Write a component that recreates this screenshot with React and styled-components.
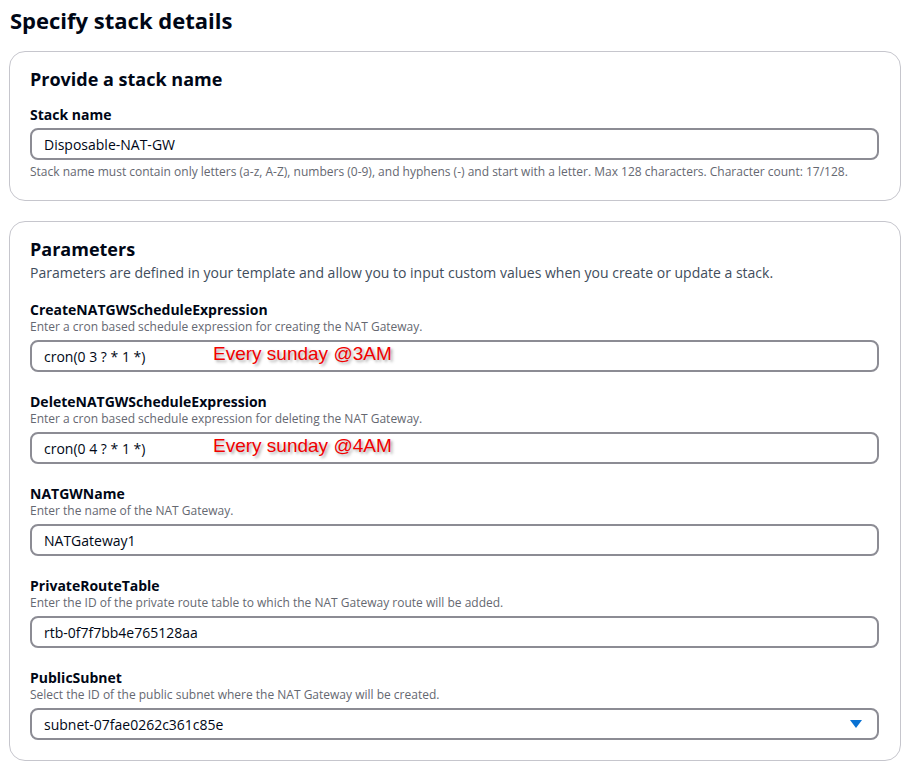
import React from 'react'
import styled, { createGlobalStyle } from 'styled-components'

const GlobalStyle = createGlobalStyle`
  body {
    margin: 0;
    background: #ffffff;
    font-family: "Open Sans", "Noto Sans", sans-serif;
    color: #000716;
  }
`;

const Page = styled.div`
  width: 912px;
  padding: 9px 11px 12px 9px;
  box-sizing: border-box;
  display: flex;
  flex-direction: column;
  gap: 20px;
`;

const PageTitle = styled.h1`
  margin: 0 0 0 1px;
  font-size: 22px;
  line-height: 22px;
  font-weight: 700;
  color: #000716;
`;

const Card = styled.section`
  border: 1px solid #c6c6cd;
  border-radius: 16px;
  padding: 15px 21px 20px 20px;
  display: flex;
  flex-direction: column;
`;

const CardTitle = styled.h2`
  margin: 0 0 2px;
  font-size: 18px;
  line-height: 24px;
  font-weight: 700;
  color: #000716;
`;

const CardDesc = styled.p`
  margin: 0;
  font-size: 14px;
  line-height: 20px;
  color: #414d5c;
`;

const FieldList = styled.div`
  display: flex;
  flex-direction: column;
  gap: 20px;
  margin-top: ${p => p.$top}px;
`;

const Field = styled.div`
  display: flex;
  flex-direction: column;
`;

const Label = styled.label`
  font-size: 14px;
  line-height: 19px;
  font-weight: 700;
  color: #000716;
`;

const Hint = styled.div`
  font-size: 12px;
  line-height: 16px;
  color: #656871;
`;

const InputBox = styled.div`
  position: relative;
  height: 32px;
  box-sizing: border-box;
  border: 2px solid #8c8c94;
  border-radius: 8px;
  margin: ${p => (p.$below ? '4px 0 4px' : '5px 0 0')};
  padding: 0 12px;
  display: flex;
  align-items: center;
  justify-content: space-between;
  font-size: 14px;
  color: #000716;
`;

const Note = styled.span`
  position: absolute;
  left: 181px;
  top: 0;
  font-family: "Liberation Sans", Arial, sans-serif;
  font-size: 19px;
  line-height: 24px;
  color: #f00000;
  text-shadow: 2px 2px 3px rgba(0, 0, 0, 0.35);
`;

const Caret = styled.span`
  width: 0;
  height: 0;
  border-left: 6px solid transparent;
  border-right: 6px solid transparent;
  border-top: 8px solid #0972d3;
  margin-right: 3px;
`;

const params = [
  {
    name: 'CreateNATGWScheduleExpression',
    hint: 'Enter a cron based schedule expression for creating the NAT Gateway.',
    value: 'cron(0 3 ? * 1 *)',
    note: 'Every sunday @3AM',
  },
  {
    name: 'DeleteNATGWScheduleExpression',
    hint: 'Enter a cron based schedule expression for deleting the NAT Gateway.',
    value: 'cron(0 4 ? * 1 *)',
    note: 'Every sunday @4AM',
  },
  {
    name: 'NATGWName',
    hint: 'Enter the name of the NAT Gateway.',
    value: 'NATGateway1',
  },
  {
    name: 'PrivateRouteTable',
    hint: 'Enter the ID of the private route table to which the NAT Gateway route will be added.',
    value: 'rtb-0f7f7bb4e765128aa',
  },
  {
    name: 'PublicSubnet',
    hint: 'Select the ID of the public subnet where the NAT Gateway will be created.',
    value: 'subnet-07fae0262c361c85e',
    select: true,
  },
];

export default function App() {
  return (
    <>
      <GlobalStyle />
      <Page>
        <PageTitle>Specify stack details</PageTitle>

        <Card>
          <CardTitle>Provide a stack name</CardTitle>
          <FieldList $top={12}>
            <Field>
              <Label>Stack name</Label>
              <InputBox $below>Disposable-NAT-GW</InputBox>
              <Hint>
                Stack name must contain only letters (a-z, A-Z), numbers (0-9), and hyphens (-) and start with a letter. Max 128 characters. Character count: 17/128.
              </Hint>
            </Field>
          </FieldList>
        </Card>

        <Card>
          <CardTitle>Parameters</CardTitle>
          <CardDesc>
            Parameters are defined in your template and allow you to input custom values when you create or update a stack.
          </CardDesc>
          <FieldList $top={17}>
            {params.map(p => (
              <Field key={p.name}>
                <Label>{p.name}</Label>
                <Hint>{p.hint}</Hint>
                <InputBox>
                  <span>{p.value}</span>
                  {p.note && <Note>{p.note}</Note>}
                  {p.select && <Caret />}
                </InputBox>
              </Field>
            ))}
          </FieldList>
        </Card>
      </Page>
    </>
  );
}
